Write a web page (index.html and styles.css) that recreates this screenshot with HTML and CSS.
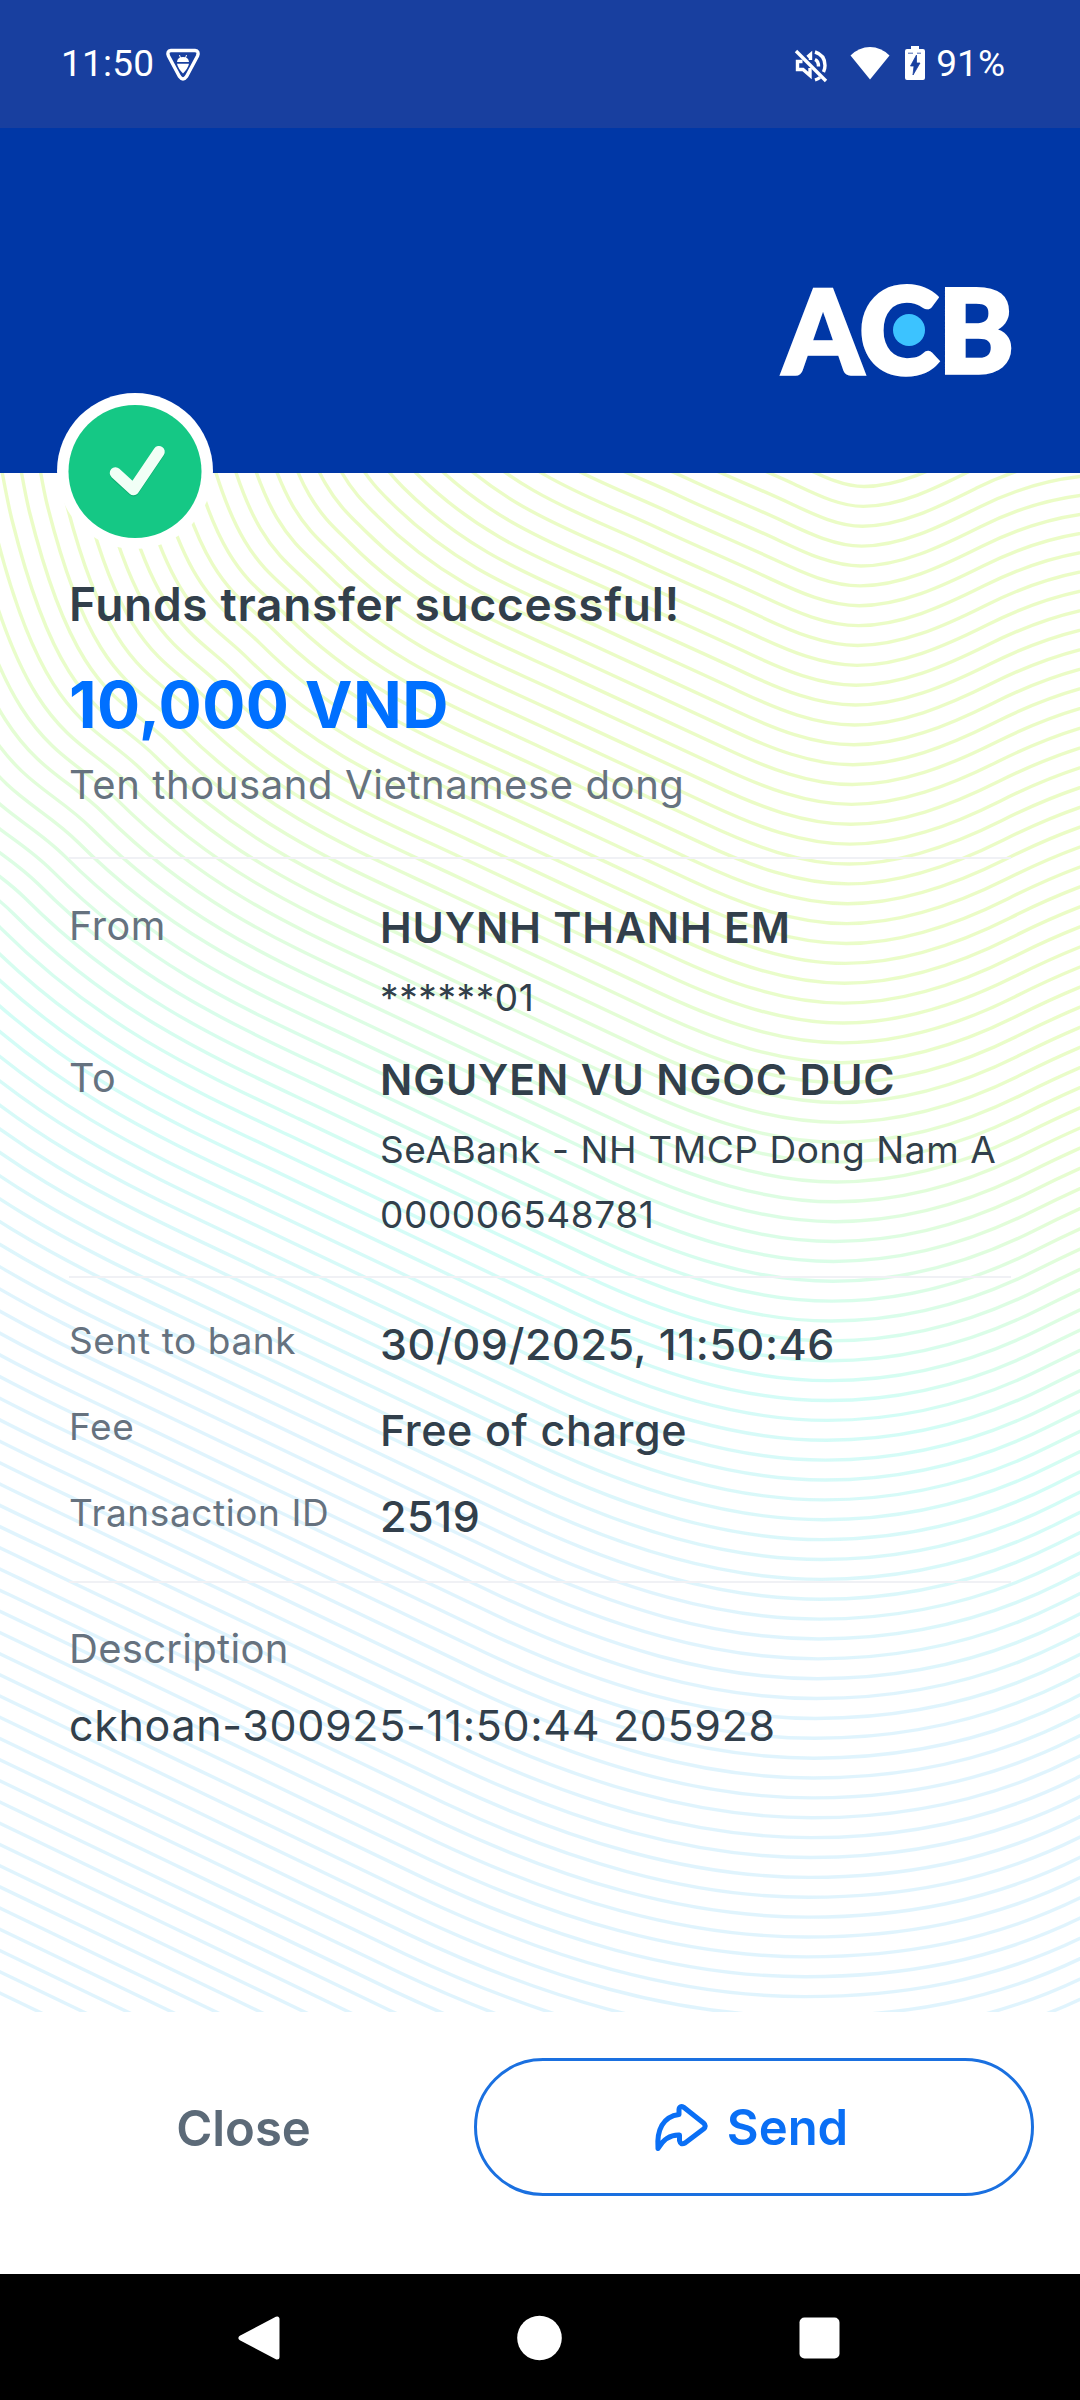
FILE: index.html
```html
<!DOCTYPE html>
<html lang="en">
<head>
    <meta charset="UTF-8">
    <meta name="viewport" content="width=device-width, initial-scale=1.0">
    <title>Funds transfer</title>
    <link rel="stylesheet" href="styles.css">
</head>
<body>
    <div class="screen">
        <div class="status-bar">
            <div class="status-left">
                <span class="clock">11:50</span>
                <svg class="icon-shield" width="36" height="36" viewBox="0 0 36 36">
                    <path d="M6 3.500H30Q34.500 4 32.500 9L21.500 29.500Q18 34.500 14.500 29.500L3.500 9Q1.500 4 6 3.500Z" fill="none" stroke="#fff" stroke-width="3.400"/>
                    <path d="M12 15Q12.500 10 18 10Q23.500 10 24 15ZM12 16.800H24Q23 21.500 18 26.500Q13 21.500 12 16.800Z" fill="#fff"/>
                    <path d="M14.500 8L15.500 11M21.500 8L20.500 11" stroke="#fff" stroke-width="1"/>
                </svg>
            </div>
            <div class="status-right">
                <svg class="icon-mute" width="34" height="34" viewBox="0 0 34 34" fill="none" stroke="#fff" stroke-width="3.400">
                    <path d="M2 2L32 32"/>
                    <path d="M8.500 12.500H3.500V20.500H9L16 26.500V19"/>
                    <path d="M13.500 8L16.500 5.500V11"/>
                    <path d="M21 3Q31 6 31 16.500Q31 20 29.500 23"/>
                    <path d="M21 10.500Q24.500 12 24.500 17.500M21 31Q24 30 26 28.500"/>
                </svg>
                <svg class="icon-wifi" width="40" height="34" viewBox="0 0 40 34">
                    <path d="M20 33.500L.5 9.500Q9 1 20 1T39.500 9.500Z" fill="#fff"/>
                </svg>
                <svg class="icon-battery" width="20" height="34" viewBox="0 0 20 34">
                    <path d="M6 0H14V3H18Q20 3 20 5V32Q20 34 18 34H2Q0 34 0 32V5Q0 3 2 3H6Z" fill="#fff"/>
                    <path d="M11.500 9L5.500 20H9L8 29L15 17H11.500ZM3 7.200H8M12 7.200H16" fill="#183f9f" stroke="#183f9f" stroke-width=".8"/>
                </svg>
                <span class="percent">91%</span>
            </div>
        </div>

        <div class="header">
            <svg class="logo" width="250" height="170" viewBox="0 -30 250 170">
                <g class="logo-text">
                    <text x="11" y="97" font-size="116" textLength="80" lengthAdjust="spacingAndGlyphs">A</text>
                    <text x="87" y="97" font-size="121" textLength="80" lengthAdjust="spacingAndGlyphs">C</text>
                    <text x="166" y="95.500" font-size="116" textLength="76" lengthAdjust="spacingAndGlyphs">B</text>
                </g>
                <circle cx="137" cy="53" r="16" fill="#3cc3ff"/>
            </svg>
        </div>

        <div class="receipt">
            <svg class="waves" id="waves" width="1080" height="1539" viewBox="0 473 1080 1539">
                <defs>
                    <linearGradient id="waveColor" gradientUnits="userSpaceOnUse" x1="0" y1="480" x2="-307" y2="1162">
                        <stop offset="0" stop-color="#ebfcc6"/>
                        <stop offset=".2" stop-color="#e9fdca"/>
                        <stop offset=".42" stop-color="#dffde0"/>
                        <stop offset=".65" stop-color="#d3fdf6"/>
                        <stop offset="1" stop-color="#e0f4fd"/>
                    </linearGradient>
                </defs>
            </svg>
            <svg class="badge" width="156" height="156" viewBox="0 0 156 156">
                <circle cx="78" cy="78" r="78" fill="#fff"/>
                <circle cx="78" cy="78.500" r="66.500" fill="#15c885"/>
                <path d="M58.500 82L76.500 98L102 60.500" fill="none" stroke="#0eae71" stroke-width="11" stroke-linecap="round" stroke-linejoin="round"/>
                <path d="M58.500 80L76.500 96.500L102 58.700" fill="none" stroke="#f1fff6" stroke-width="11.500" stroke-linecap="round" stroke-linejoin="round"/>
            </svg>

            <div class="content">
                <h1>Funds transfer successful!</h1>
                <p class="amount">10,000 VND</p>
                <p class="amount-words">Ten thousand Vietnamese dong</p>

                <div class="section parties">
                    <span class="label">From</span>
                    <div>
                        <p class="name">HUYNH THANH EM</p>
                        <p class="account">******01</p>
                    </div>
                    <span class="label">To</span>
                    <div>
                        <p class="name">NGUYEN VU NGOC DUC</p>
                        <p class="account">SeABank - NH TMCP Dong Nam A</p>
                        <p class="number">000006548781</p>
                    </div>
                </div>

                <div class="section details">
                    <span class="label">Sent to bank</span>
                    <span class="value">30/09/2025, 11:50:46</span>
                    <span class="label">Fee</span>
                    <span class="value">Free of charge</span>
                    <span class="label">Transaction ID</span>
                    <span class="value">2519</span>
                </div>

                <div class="section description">
                    <p class="caption">Description</p>
                    <p class="memo">ckhoan-300925-11:50:44 205928</p>
                </div>
            </div>
        </div>

        <div class="actions">
            <button class="btn-close">Close</button>
            <button class="btn-send">
                <svg width="56" height="50" viewBox="0 0 56 50" fill="none" stroke="#0a6ff5" stroke-width="5" stroke-linejoin="round" stroke-linecap="round">
                    <path d="M5 45.500C3.500 27 10 13.500 26 11.500V6.500Q26.500 2 31 4.500L50.500 20Q54 23 50.500 26L32 40Q27.500 42.500 26.500 37.500V32Q13 31.500 5 45.500Z"/>
                </svg>
                <span>Send</span>
            </button>
        </div>

        <div class="nav-bar">
            <svg width="45" height="46" viewBox="0 0 45 46"><path d="M41 4V42L5 23Z" fill="#fff" stroke="#fff" stroke-width="5" stroke-linejoin="round"/></svg>
            <svg width="45" height="46" viewBox="0 0 45 46"><circle cx="22.500" cy="23" r="22.300" fill="#fff"/></svg>
            <svg width="45" height="46" viewBox="0 0 45 46"><rect x="2.500" y="2.500" width="40" height="41" rx="5" fill="#fff"/></svg>
        </div>
    </div>

    <script>
        // Each anchor: x, y on the first line, then how far it moves per line, and the slope there
        const anchors = [
            [552, 240, -18.8, 5, 6],
            [537, 280, -17.5, 8, 4],
            [546, 331, -13, 14.2, 1],
            [720, 430.6, -10, 16.4, 0.47],
            [800, 465.6, -5, 18.84, 0.47],
            [864, 486.5, -0.78, 19.87, 0],
            [973.5, 449, 1.5, 19.55, -0.5],
            [1095, 420, 5, 18.3, 0]
        ];
        const svg = document.getElementById('waves');

        for (let n = 0; n < 93; n++) {
            const pts = anchors.map(a => [a[0] + a[2] * n, a[1] + a[3] * n, a[4]]);
            let d = `M${pts[0][0]} ${pts[0][1]}`;
            for (let i = 1; i < pts.length; i++) {
                const [x0, y0, m0] = pts[i - 1];
                const [x1, y1, m1] = pts[i];
                const h = (x1 - x0) / 3;
                d += `C${x0 + h} ${y0 + h * m0} ${x1 - h} ${y1 - h * m1} ${x1} ${y1}`;
            }
            const path = document.createElementNS('http://www.w3.org/2000/svg', 'path');
            path.setAttribute('d', d);
            path.setAttribute('class', 'wave');
            svg.appendChild(path);
        }
    </script>
</body>
</html>
```
FILE: styles.css
```css
* {
    margin: 0;
    padding: 0;
    box-sizing: border-box;
}

body {
    font-family: 'Inter', sans-serif;
    background: #fff;
    color: #323f4b;
}

.screen {
    width: 1080px;
    height: 2400px;
    display: flex;
    flex-direction: column;
    overflow: hidden;
}

/* Status bar */
.status-bar {
    height: 128px;
    background: #183f9f;
    color: #fff;
    font-family: 'Roboto', sans-serif;
    font-size: 37px;
    line-height: 44px;
    display: flex;
    justify-content: space-between;
    padding: 42px 75px 0 61px;
}

.status-left,
.status-right {
    display: flex;
}

.clock {
    letter-spacing: 0.2px;
}

.icon-shield {
    margin: 5px 0 0 11px;
}

.icon-mute {
    margin-top: 7px;
}

.icon-wifi {
    margin: 4px 0 0 22px;
}

.icon-battery {
    margin: 4px 11px 0 15px;
}

/* Header */
.header {
    height: 345px;
    background: #0037a6;
    display: flex;
    justify-content: flex-end;
    padding: 119px 58px 0 0;
}

.logo-text {
    fill: #fff;
    stroke: #fff;
    stroke-width: 3.5;
    font-family: 'Lato', sans-serif;
    font-weight: 900;
}

/* Receipt */
.receipt {
    height: 1539px;
    position: relative;
}

.waves {
    position: absolute;
    top: 0;
    left: 0;
}

.wave {
    fill: none;
    stroke: url(#waveColor);
    stroke-width: 3.4;
}

.badge {
    position: absolute;
    top: -80px;
    left: 57px;
}

.content {
    position: relative;
    padding: 103px 69px 0;
    letter-spacing: 0.6px;
}

h1 {
    font-size: 46px;
    line-height: 56px;
    font-weight: 600;
    letter-spacing: 0.7px;
}

.amount {
    margin-top: 35px;
    font-size: 64px;
    line-height: 76px;
    font-weight: 700;
    letter-spacing: 0.4px;
    color: #0070ff;
}

.amount-words {
    margin-top: 17px;
    font-size: 40px;
    line-height: 50px;
    color: #66727f;
}

.section {
    border-top: 2px solid #f0f1f5;
}

.parties,
.details {
    display: grid;
    grid-template-columns: 311px 1fr;
}

.label {
    color: #66727f;
}

.parties {
    margin-top: 47px;
    padding-top: 39px;
    row-gap: 22px;
}

.parties .label {
    font-size: 39.5px;
    line-height: 56px;
}

.name {
    font-size: 42.5px;
    line-height: 60px;
    font-weight: 600;
    letter-spacing: 0.9px;
}

.account {
    margin-top: 10px;
    font-size: 37px;
    line-height: 60px;
}

.number {
    margin-top: 5px;
    font-size: 37px;
    line-height: 60px;
}

.details {
    margin-top: 31px;
    padding-top: 36px;
    row-gap: 26px;
}

.details .label {
    font-size: 37px;
    line-height: 53px;
}

.value {
    font-size: 43px;
    line-height: 60px;
    font-weight: 500;
}

.description {
    margin-top: 35px;
    padding-top: 40px;
}

.caption {
    font-size: 40px;
    line-height: 52px;
    letter-spacing: 0.3px;
    color: #66727f;
}

.memo {
    margin-top: 20px;
    font-size: 43px;
    line-height: 60px;
    letter-spacing: 0.65px;
}

/* Buttons */
.actions {
    height: 262px;
    background: #fff;
    display: flex;
    padding: 46px 46px 0 0;
}

button {
    height: 138px;
    background: none;
    border: none;
    font-family: inherit;
    font-size: 49px;
    font-weight: 600;
}

.btn-close {
    width: 474px;
    padding: 2px 0 0 13px;
    color: #5c6a78;
}

.btn-send {
    flex: 1;
    display: flex;
    align-items: center;
    justify-content: center;
    gap: 18px;
    padding: 1px 7px 0 0;
    border: 3px solid #1a70e0;
    border-radius: 69px;
    color: #0a6ff5;
}

/* Android navigation */
.nav-bar {
    height: 126px;
    background: #000;
    display: flex;
    justify-content: space-between;
    padding: 41px 238px 0 236px;
}
```
